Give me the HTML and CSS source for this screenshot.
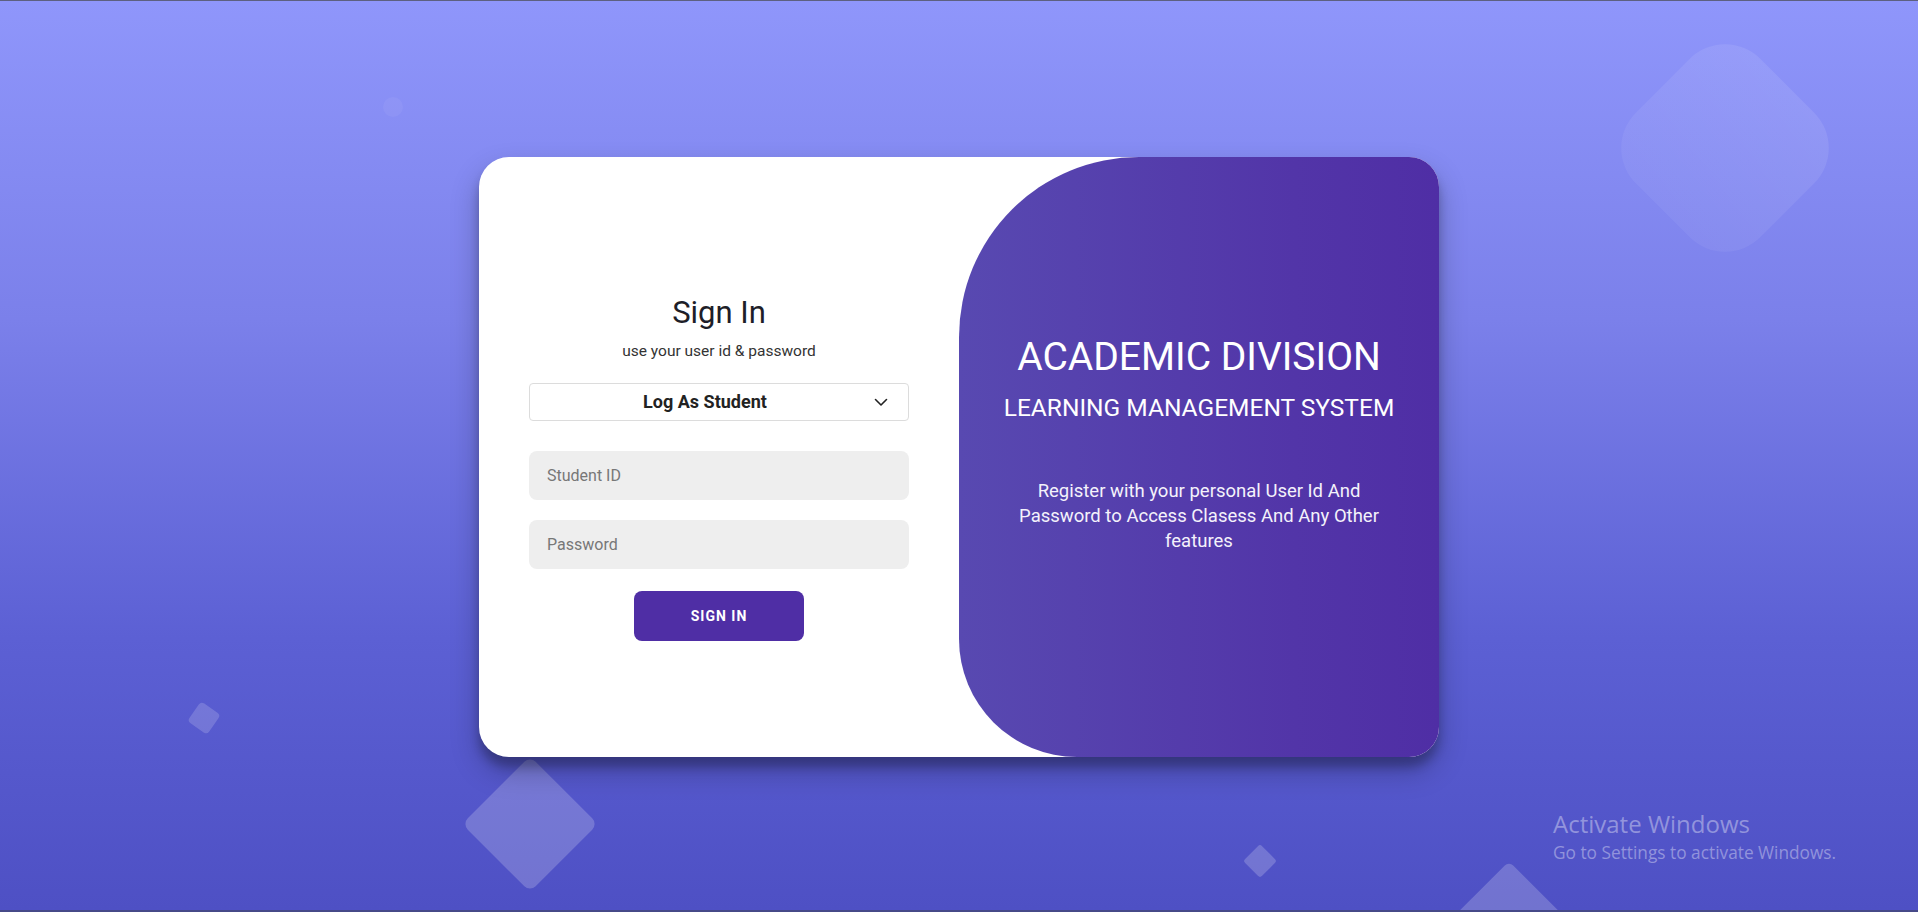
FILE: index.html
```html
<!DOCTYPE html>
<html lang="en">
<head>
<meta charset="utf-8">
<title>Sign In</title>
<link rel="stylesheet" href="styles.css">
</head>
<body>
<div class="page">
  <span class="shape shape-dot"></span>
  <span class="shape shape-big"></span>
  <span class="shape shape-small-left"></span>
  <span class="shape shape-mid"></span>
  <span class="shape shape-small-bottom"></span>
  <span class="shape shape-peak"></span>

  <div class="card">
    <form class="form-side">
      <h1 class="title">Sign In</h1>
      <p class="subtitle">use your user id &amp; password</p>
      <div class="select">
        <span class="select-label">Log As Student</span>
        <svg class="chevron" width="14" height="9" viewBox="0 0 14 9"><path d="M1.5 1.5 L7 7 L12.5 1.5" fill="none" stroke="#222" stroke-width="1.6" stroke-linecap="round" stroke-linejoin="round"/></svg>
      </div>
      <input class="field field-first" type="text" placeholder="Student ID">
      <input class="field" type="password" placeholder="Password">
      <button class="btn" type="button">SIGN IN</button>
    </form>
    <div class="overlay">
      <h2 class="o-title">ACADEMIC DIVISION</h2>
      <h3 class="o-sub">LEARNING MANAGEMENT SYSTEM</h3>
      <p class="o-text">Register with your personal User Id And Password to Access Clasess And Any Other features</p>
    </div>
  </div>

  <div class="watermark">
    <div class="wm-title">Activate Windows</div>
    <div class="wm-sub">Go to Settings to activate Windows.</div>
  </div>
</div>
</body>
</html>
```

FILE: styles.css
```css
html, body {
  margin: 0;
  padding: 0;
}
body {
  font-family: Roboto, "Liberation Sans", sans-serif;
}
.page {
  position: relative;
  height: 912px;
  box-sizing: border-box;
  border-top: 1px solid #5d6080;
  border-bottom: 2px solid #464a88;
  padding-top: 3px;
  overflow: hidden;
  background: linear-gradient(to bottom, #8f96fb 0%, #7b80ea 35%, #5c60d4 70%, #4e50c4 100%);
  display: flex;
  align-items: center;
  justify-content: center;
}
.shape {
  position: absolute;
  display: block;
  background: rgba(255, 255, 255, 0.2);
}
.shape-dot {
  left: 383px;
  top: 96px;
  width: 20px;
  height: 20px;
  border-radius: 50%;
  background: rgba(255, 255, 255, 0.05);
}
.shape-big {
  left: 1637px;
  top: 59px;
  width: 176px;
  height: 176px;
  border-radius: 50px;
  transform: rotate(45deg);
  background: linear-gradient(to bottom, rgba(255,255,255,0.09), rgba(255,255,255,0.05));
}
.shape-small-left {
  left: 192px;
  top: 705px;
  width: 24px;
  height: 24px;
  border-radius: 4px;
  transform: rotate(35deg);
  background: rgba(255, 255, 255, 0.17);
}
.shape-mid {
  left: 482px;
  top: 775px;
  width: 96px;
  height: 96px;
  border-radius: 8px;
  transform: rotate(45deg);
  background: rgba(255, 255, 255, 0.2);
}
.shape-small-bottom {
  left: 1248px;
  top: 848px;
  width: 24px;
  height: 24px;
  border-radius: 3px;
  transform: rotate(45deg);
  background: rgba(255, 255, 255, 0.2);
}
.shape-peak {
  left: 1454px;
  top: 883px;
  width: 110px;
  height: 110px;
  border-radius: 6px;
  transform: rotate(45deg);
  background: rgba(255, 255, 255, 0.2);
}
.card {
  position: relative;
  z-index: 1;
  width: 960px;
  height: 600px;
  background: #fff;
  border-radius: 30px;
  overflow: hidden;
  display: flex;
  box-shadow: 0 14px 28px rgba(0, 0, 0, 0.25), 0 10px 10px rgba(0, 0, 0, 0.22);
}
.form-side {
  width: 50%;
  box-sizing: border-box;
  padding: 20px 50px 0;
  display: flex;
  flex-direction: column;
  align-items: center;
  justify-content: center;
  margin: 0;
}
.title {
  margin: 0;
  font-size: 31px;
  line-height: 38px;
  font-weight: 400;
  color: #1e1e28;
}
.subtitle {
  margin: 9px 0 0;
  font-size: 15.5px;
  line-height: 20px;
  color: #333;
}
.select {
  margin-top: 22px;
  width: 380px;
  height: 38px;
  box-sizing: border-box;
  border: 1px solid #dcdcdc;
  border-radius: 4px;
  position: relative;
  display: flex;
  align-items: center;
  justify-content: center;
  background: #fff;
}
.select-label {
  font-size: 18px;
  font-weight: 700;
  color: #222;
  margin-left: -28px;
}
.chevron {
  position: absolute;
  right: 20px;
  top: 14px;
}
.field {
  width: 380px;
  height: 49px;
  box-sizing: border-box;
  border: none;
  border-radius: 8px;
  background: #eeeeee;
  padding: 0 18px;
  font-family: Roboto, "Liberation Sans", sans-serif;
  font-size: 16px;
  color: #333;
  margin-top: 20px;
  outline: none;
}
.field::placeholder {
  color: #777;
}
.field-first {
  margin-top: 30px;
}
.btn {
  margin-top: 22px;
  width: 170px;
  height: 50px;
  border: none;
  border-radius: 8px;
  background: #4f2ea5;
  color: #fff;
  font-family: Roboto, "Liberation Sans", sans-serif;
  font-size: 14px;
  font-weight: 700;
  letter-spacing: 1px;
}
.overlay {
  width: 50%;
  box-sizing: border-box;
  background: linear-gradient(to right, #5849b1 0%, #5235a8 70%, #4f2ea5 100%);
  border-radius: 180px 0 0 118px;
  color: #fff;
  display: flex;
  flex-direction: column;
  align-items: center;
  justify-content: center;
  text-align: center;
  padding: 0 45px 26px;
}
.o-title {
  margin: 0;
  font-size: 39px;
  line-height: 46px;
  font-weight: 400;
  white-space: nowrap;
}
.o-sub {
  margin: 12px 0 0;
  font-size: 24.5px;
  line-height: 32px;
  font-weight: 400;
  white-space: nowrap;
}
.o-text {
  margin: 55px 0 0;
  font-size: 18.5px;
  line-height: 25px;
  font-weight: 400;
  color: #f4f2fb;
}
.watermark {
  position: absolute;
  left: 1553px;
  top: 806px;
  color: rgba(255, 255, 255, 0.38);
  font-family: "Open Sans", "Noto Sans", sans-serif;
}
.wm-title {
  font-size: 24px;
  line-height: 34px;
}
.wm-sub {
  font-size: 17.3px;
  line-height: 24px;
}
```
